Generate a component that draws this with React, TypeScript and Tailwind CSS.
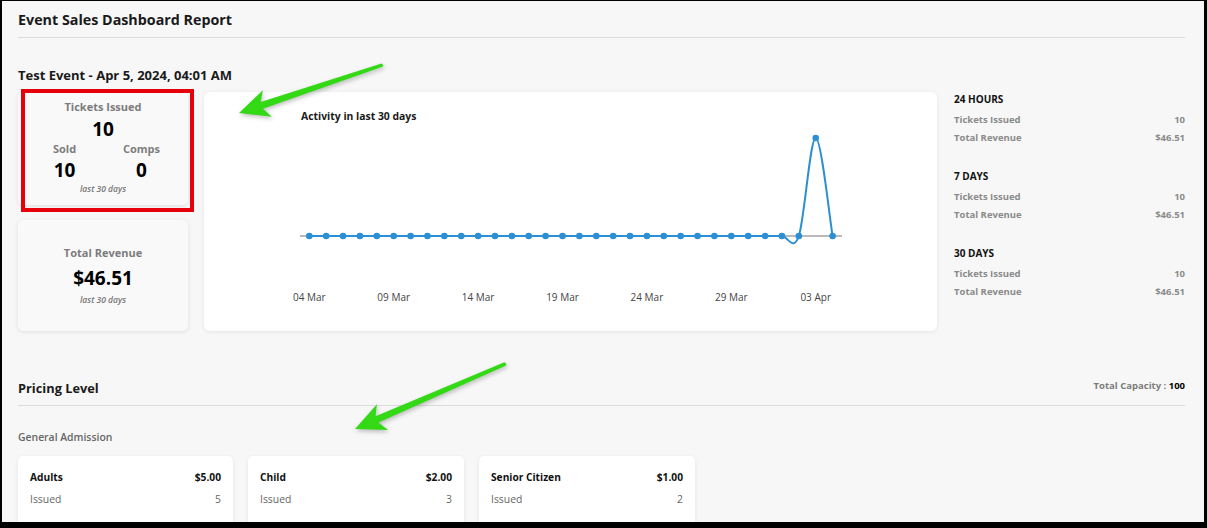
import React from "react";

const days = Array.from({ length: 32 }, (_, i) => ({
  x: 309.3 + 16.88 * i,
  y: i === 30 ? 138 : 236,
}));

const labels = ["04 Mar", "09 Mar", "14 Mar", "19 Mar", "24 Mar", "29 Mar", "03 Apr"];

const periods = ["24 HOURS", "7 DAYS", "30 DAYS"];

const prices = [
  { name: "Adults", price: "$5.00", issued: 5, w: "w-[215px]" },
  { name: "Child", price: "$2.00", issued: 3, w: "w-[216px]" },
  { name: "Senior Citizen", price: "$1.00", issued: 2, w: "w-[216px]" },
];

function ActivityChart() {
  const d =
    `M${days[0].x},236 L${days[28].x},236 ` +
    "C787.57,236 793.2,252.3 798.82,236 " +
    "C804.45,219.7 810.07,138 815.7,138 " +
    "C821.33,138 829.77,219.7 832.58,236";

  return (
    <div className="h-[239px] w-[733px] rounded-[6px] bg-white shadow-[0_1px_4px_rgba(0,0,0,0.08)]">
      <div className="pl-[97px] pt-[17px] text-[10.4px] font-bold leading-[14px] text-[#1a1a1a]">
        Activity in last 30 days
      </div>
      <svg width="733" height="208" viewBox="204 123 733 208" className="block">
        <line x1="300" y1="236" x2="842" y2="236" stroke="#777" strokeWidth="1" />
        <path d={d} fill="none" stroke="#2d8fd3" strokeWidth="2" />
        {days.map((p, i) => (
          <circle key={i} cx={p.x} cy={p.y} r="3.3" fill="#2d8fd3" />
        ))}
        {labels.map((l, i) => (
          <text
            key={l}
            x={days[i * 5].x}
            y="301"
            textAnchor="middle"
            fontSize="10"
            fill="#444"
            fontFamily="'Open Sans', sans-serif"
          >
            {l}
          </text>
        ))}
      </svg>
    </div>
  );
}

export default function App() {
  return (
    <div className="h-[528px] w-[1207px] bg-black pb-[6px] pl-[2px] pr-[3px] pt-[1px] font-['Open_Sans',sans-serif]">
      <div className="relative h-full overflow-hidden bg-[#f7f7f7] pl-[16px] pr-[19px]">
        <div className="border-b border-[#dcdcdc] pb-[7px] pt-[9px]">
          <h1 className="text-[14.3px] font-bold leading-[20px] text-[#1a1a1a]">
            Event Sales Dashboard Report
          </h1>
        </div>

        <h2 className="mt-[27px] text-[13px] font-bold leading-[20px] text-[#1a1a1a]">
          Test Event - Apr 5, 2024, 04:01 AM
        </h2>

        <div className="mt-[7px] flex">
          <div className="flex w-[170px] flex-col gap-[15px]">
            <div className="h-[113px] rounded-[5px] bg-[#f9f9f9] px-[8px] pt-[7px] text-center shadow-[0_1px_4px_rgba(0,0,0,0.1)]">
              <div className="text-[11px] font-bold leading-[16px] text-[#7c7c7c]">
                Tickets Issued
              </div>
              <div className="mt-[1px] text-[19px] font-bold leading-[26px] text-black">10</div>
              <div className="grid grid-cols-2">
                <div>
                  <div className="text-[11px] font-bold leading-[14px] text-[#7c7c7c]">Sold</div>
                  <div className="mt-[1px] text-[19px] font-bold leading-[26px] text-black">10</div>
                </div>
                <div>
                  <div className="text-[11px] font-bold leading-[14px] text-[#7c7c7c]">Comps</div>
                  <div className="mt-[1px] text-[19px] font-bold leading-[26px] text-black">0</div>
                </div>
              </div>
              <div className="text-[8.5px] italic font-semibold leading-[12px] text-[#777]">
                last 30 days
              </div>
            </div>

            <div className="flex h-[111px] flex-col items-center justify-center rounded-[5px] bg-[#f9f9f9] shadow-[0_1px_4px_rgba(0,0,0,0.1)]">
              <div className="text-[11px] font-bold leading-[16px] text-[#7c7c7c]">
                Total Revenue
              </div>
              <div className="mt-[3px] text-[19px] font-bold leading-[28px] text-black">$46.51</div>
              <div className="mt-[2px] text-[8.5px] italic font-semibold leading-[12px] text-[#777]">
                last 30 days
              </div>
            </div>
          </div>

          <div className="ml-[16px]">
            <ActivityChart />
          </div>

          <div className="ml-[17px] flex w-[231px] flex-col gap-[22px]">
            {periods.map((p) => (
              <div key={p}>
                <div className="text-[10px] font-bold leading-[14px] text-[#111]">{p}</div>
                <div className="mt-[5px] text-[9.5px] font-bold leading-[18px] text-[#8a8a8a]">
                  <div className="flex justify-between">
                    <span>Tickets Issued</span>
                    <span>10</span>
                  </div>
                  <div className="flex justify-between">
                    <span>Total Revenue</span>
                    <span>$46.51</span>
                  </div>
                </div>
              </div>
            ))}
          </div>
        </div>

        <div className="mt-[47px] flex items-center justify-between border-b border-[#dcdcdc] pb-[7px]">
          <h2 className="text-[12.8px] font-bold leading-[20px] text-[#1a1a1a]">Pricing Level</h2>
          <div className="mb-[4px] text-[9.5px] font-bold text-[#7c7c7c]">
            Total Capacity : <span className="text-black">100</span>
          </div>
        </div>

        <div className="mt-[23px] text-[10.4px] font-semibold leading-[16px] text-[#666]">
          General Admission
        </div>

        <div className="mt-[11px] flex gap-[15px]">
          {prices.map((p) => (
            <div
              key={p.name}
              className={`${p.w} h-[100px] rounded-[5px] bg-white px-[12px] pt-[13px] shadow-[0_1px_4px_rgba(0,0,0,0.08)]`}
            >
              <div className="flex justify-between text-[10.2px] font-bold leading-[16px] text-[#111]">
                <span>{p.name}</span>
                <span>{p.price}</span>
              </div>
              <div className="mt-[6px] flex justify-between text-[10.4px] leading-[16px] text-[#666]">
                <span>Issued</span>
                <span>{p.issued}</span>
              </div>
            </div>
          ))}
        </div>

        <div className="absolute left-[19px] top-[88px] h-[123px] w-[173px] border-[4px] border-[#e5000a]" />

        <svg
          className="pointer-events-none absolute left-[-2px] top-[-1px] drop-shadow-[1px_2px_2px_rgba(0,0,0,0.25)]"
          width="1207"
          height="528"
        >
          <polygon
            points="239,113 262.9,90.2 260.7,102.1 381.5,63.4 383.5,65.5 382.5,66.8 262.9,108.7 271.9,116.8"
            fill="#33d915"
          />
          <polygon
            points="355,429 376.9,404.3 375.6,416.2 504.4,362.3 506.5,364 505.6,365.8 378.4,422.6 388.1,429.9"
            fill="#33d915"
          />
        </svg>
      </div>
    </div>
  );
}
